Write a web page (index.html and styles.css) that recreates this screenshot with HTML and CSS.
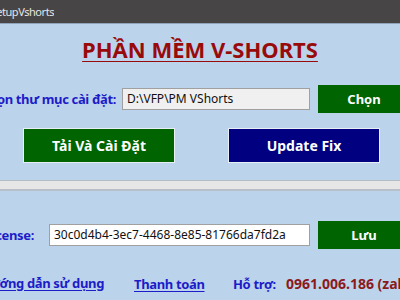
FILE: index.html
```html
<!DOCTYPE html>
<html lang="vi">
<head>
<meta charset="utf-8">
<title>SetupVshorts</title>
<link rel="stylesheet" href="styles.css">
</head>
<body>
<div class="window">
  <div class="titlebar"><div class="title-cell"><span class="title-text">SetupVshorts</span></div></div>
  <div class="content">
    <h1 class="heading">PHẦN MỀM V-SHORTS</h1>
    <div class="row row-path">
      <div class="label-cell"><span class="label">Chọn thư mục cài đặt:</span></div>
      <div class="input input-path">D:\VFP\PM VShorts</div>
      <button class="btn btn-green btn-side">Chọn</button>
    </div>
    <div class="row row-actions">
      <button class="btn btn-green btn-big">Tải Và Cài Đặt</button>
      <button class="btn btn-navy btn-big">Update Fix</button>
    </div>
    <div class="progress"></div>
    <div class="row row-license">
      <div class="label-cell"><span class="label">License:</span></div>
      <div class="input input-license">30c0d4b4-3ec7-4468-8e85-81766da7fd2a</div>
      <button class="btn btn-green btn-side">Lưu</button>
    </div>
    <div class="row row-links">
      <div class="label-cell"><a class="link">Hướng dẫn sử dụng</a></div>
      <div class="cell-pay"><a class="link">Thanh toán</a></div>
      <div class="cell-support"><span class="label">Hỗ trợ:</span></div>
      <div class="cell-phone"><span class="phone">0961.006.186 (zalo)</span></div>
    </div>
  </div>
</div>
</body>
</html>
```
FILE: styles.css
```css
html, body {
  margin: 0;
  padding: 0;
  width: 400px;
  height: 300px;
  overflow: hidden;
  background: #bcd3ec;
  font-family: "Noto Sans", "Open Sans", sans-serif;
}
.window {
  width: 400px;
  height: 300px;
  overflow: hidden;
}
.titlebar {
  height: 23px;
  background: #474545;
  border-bottom: 1px solid #8fa3bb;
  display: flex;
  align-items: center;
}
.title-cell {
  width: 54px;
  display: flex;
  justify-content: flex-end;
  overflow: hidden;
  white-space: nowrap;
}
.title-text {
  color: #e6e6e6;
  font-size: 11px;
  letter-spacing: -0.45px;
}
.content {
  display: flex;
  flex-direction: column;
}
.heading {
  margin: 11px 0 0;
  text-align: center;
  font-size: 22px;
  line-height: 28px;
  font-weight: bold;
  color: #990b0b;
  text-decoration: underline;
  text-decoration-thickness: 1px;
  text-underline-offset: 3px;
  height: 28px;
}
.row {
  display: flex;
  align-items: center;
  white-space: nowrap;
}
.label-cell {
  display: flex;
  justify-content: flex-end;
  overflow: hidden;
  flex: none;
}
.label {
  color: #1c1cc8;
  font-weight: bold;
  font-size: 13px;
  letter-spacing: -0.35px;
}
.input {
  flex: none;
  box-sizing: border-box;
  height: 22px;
  border: 1px solid #a0a0a0;
  font-size: 12px;
  line-height: 20px;
  padding-left: 4px;
  color: #111;
  overflow: hidden;
}
.input-path {
  width: 188px;
  background: #f0f0f0;
  margin-left: 6px;
}
.input-license {
  width: 261px;
  background: #ffffff;
  margin-left: 15px;
}
.btn {
  flex: none;
  border: 1px solid #e8eef6;
  color: #ffffff;
  font-family: inherit;
  font-weight: bold;
  font-size: 13px;
  padding: 0;
  cursor: pointer;
}
.btn-green { background: #006400; }
.btn-navy { background: #000080; }
.btn-side {
  width: 92px;
  height: 28px;
  margin-left: 8px;
  border-color: #006400;
}
.btn-big {
  width: 152px;
  height: 35px;
  font-size: 14px;
}
.row-path {
  margin-top: 22px;
  height: 28px;
}
.row-path .label-cell { width: 116px; }
.row-actions {
  margin-top: 15px;
  padding-left: 23px;
  gap: 53px;
}
.progress {
  margin-top: 17px;
  height: 8px;
  background: #e6e6e6;
  border-top: 1px solid #b4bcc6;
  border-bottom: 2px solid #b8bfc8;
}
.row-license {
  margin-top: 30px;
  height: 28px;
}
.row-license .label-cell { width: 34px; }
.row-links {
  margin-top: 24px;
  height: 20px;
}
.row-links .label-cell { width: 104px; }
.link {
  color: #1c1cc8;
  font-weight: bold;
  font-size: 13px;
  letter-spacing: -0.35px;
  text-decoration: underline;
  text-underline-offset: 2px;
}
.cell-pay { width: 99px; margin-left: 30px; flex: none; }
.cell-support { width: 53px; flex: none; }
.cell-phone { flex: none; }
.phone {
  color: #8b1a1a;
  font-weight: bold;
  font-size: 14px;
}
```
